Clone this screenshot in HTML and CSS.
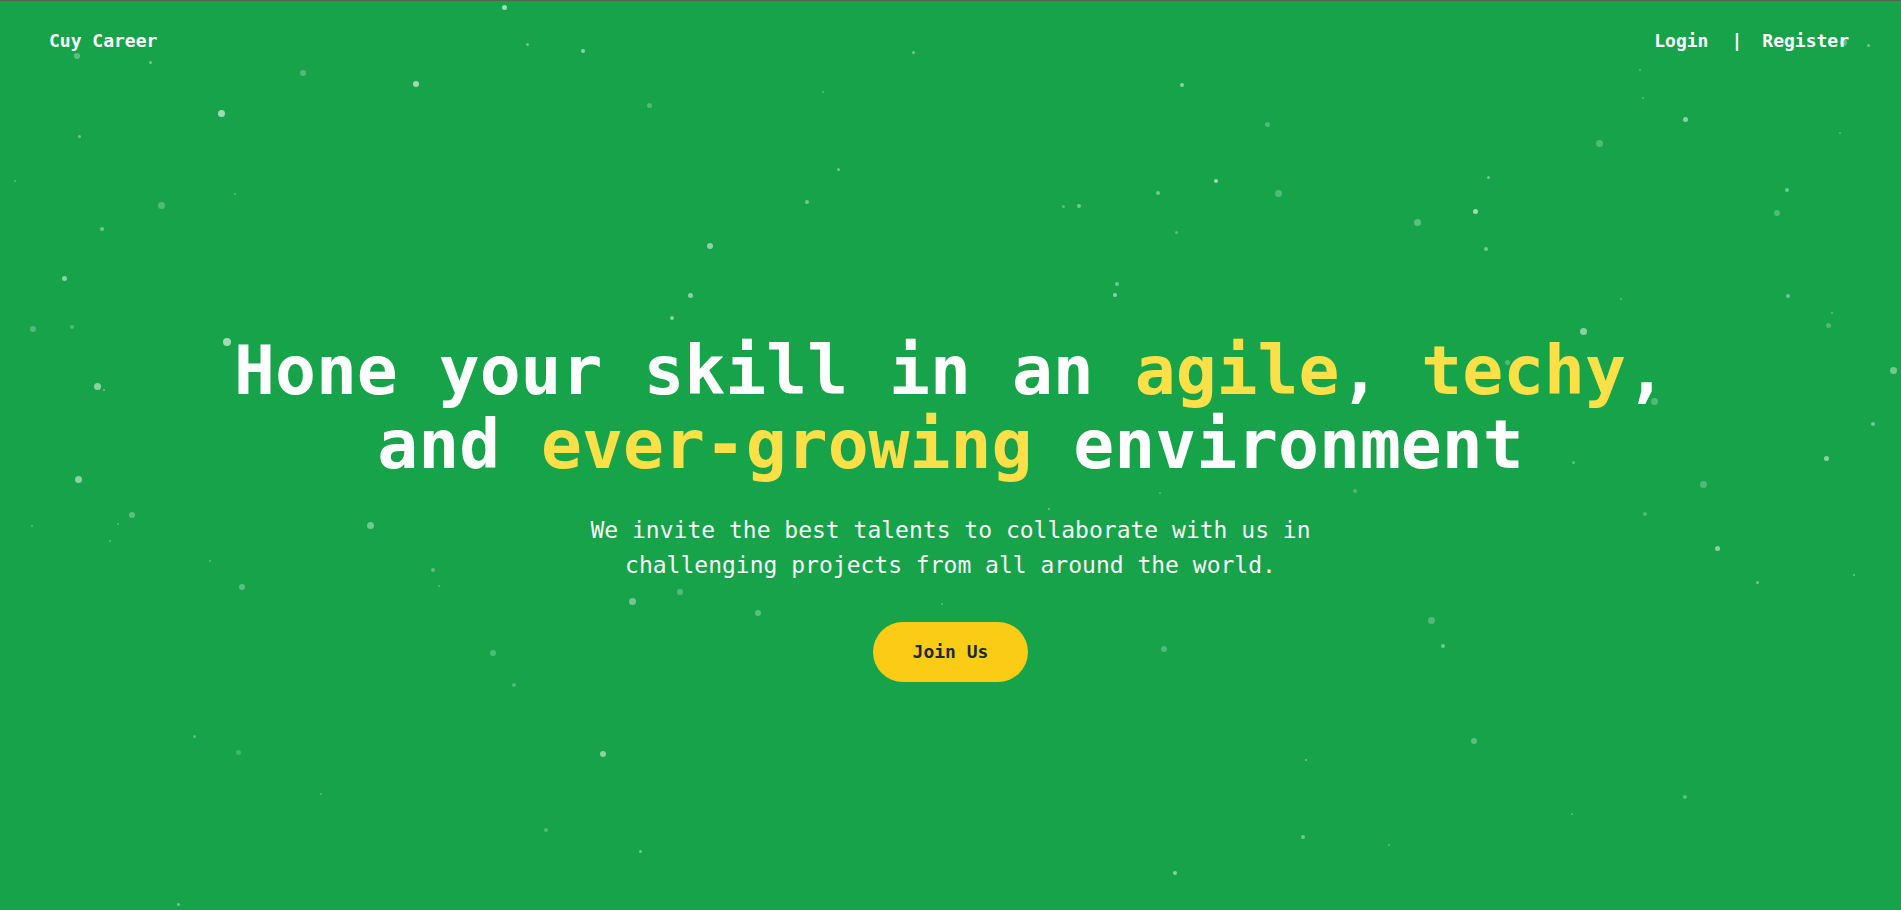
FILE: index.html
```html
<!DOCTYPE html>
<html lang="en">
<head>
<meta charset="utf-8">
<title>Cuy Career</title>
<link rel="stylesheet" href="styles.css">
</head>
<body>
<div class="page">
  <div class="particles" aria-hidden="true">
    <span class="dot" style="--x:504px;--y:7px;--s:5px;--o:.6"></span>
    <span class="dot" style="--x:527px;--y:44px;--s:3px;--o:.4"></span>
    <span class="dot" style="--x:583px;--y:51px;--s:4px;--o:.5"></span>
    <span class="dot" style="--x:416px;--y:84px;--s:6px;--o:.6"></span>
    <span class="dot" style="--x:303px;--y:73px;--s:6px;--o:.25"></span>
    <span class="dot" style="--x:221px;--y:113px;--s:7px;--o:.6"></span>
    <span class="dot" style="--x:150px;--y:62px;--s:3px;--o:.4"></span>
    <span class="dot" style="--x:77px;--y:56px;--s:6px;--o:.3"></span>
    <span class="dot" style="--x:79px;--y:136px;--s:3px;--o:.4"></span>
    <span class="dot" style="--x:15px;--y:181px;--s:2px;--o:.3"></span>
    <span class="dot" style="--x:161px;--y:205px;--s:7px;--o:.25"></span>
    <span class="dot" style="--x:102px;--y:229px;--s:4px;--o:.4"></span>
    <span class="dot" style="--x:235px;--y:194px;--s:2px;--o:.3"></span>
    <span class="dot" style="--x:710px;--y:246px;--s:6px;--o:.5"></span>
    <span class="dot" style="--x:690px;--y:295px;--s:5px;--o:.5"></span>
    <span class="dot" style="--x:672px;--y:318px;--s:4px;--o:.5"></span>
    <span class="dot" style="--x:807px;--y:202px;--s:4px;--o:.4"></span>
    <span class="dot" style="--x:838px;--y:169px;--s:3px;--o:.4"></span>
    <span class="dot" style="--x:823px;--y:92px;--s:2px;--o:.3"></span>
    <span class="dot" style="--x:649px;--y:105px;--s:5px;--o:.25"></span>
    <span class="dot" style="--x:913px;--y:52px;--s:3px;--o:.4"></span>
    <span class="dot" style="--x:1182px;--y:85px;--s:4px;--o:.5"></span>
    <span class="dot" style="--x:1267px;--y:124px;--s:5px;--o:.25"></span>
    <span class="dot" style="--x:1216px;--y:181px;--s:4px;--o:.6"></span>
    <span class="dot" style="--x:1158px;--y:193px;--s:4px;--o:.4"></span>
    <span class="dot" style="--x:1063px;--y:206px;--s:3px;--o:.3"></span>
    <span class="dot" style="--x:1079px;--y:206px;--s:4px;--o:.4"></span>
    <span class="dot" style="--x:1278px;--y:193px;--s:7px;--o:.25"></span>
    <span class="dot" style="--x:1176px;--y:232px;--s:3px;--o:.3"></span>
    <span class="dot" style="--x:1475px;--y:211px;--s:5px;--o:.6"></span>
    <span class="dot" style="--x:1488px;--y:177px;--s:3px;--o:.4"></span>
    <span class="dot" style="--x:1417px;--y:222px;--s:7px;--o:.3"></span>
    <span class="dot" style="--x:1486px;--y:249px;--s:4px;--o:.4"></span>
    <span class="dot" style="--x:1599px;--y:143px;--s:7px;--o:.25"></span>
    <span class="dot" style="--x:1685px;--y:119px;--s:5px;--o:.5"></span>
    <span class="dot" style="--x:1643px;--y:98px;--s:2px;--o:.3"></span>
    <span class="dot" style="--x:1640px;--y:70px;--s:2px;--o:.3"></span>
    <span class="dot" style="--x:1787px;--y:190px;--s:4px;--o:.4"></span>
    <span class="dot" style="--x:1777px;--y:213px;--s:6px;--o:.25"></span>
    <span class="dot" style="--x:1843px;--y:42px;--s:7px;--o:.3"></span>
    <span class="dot" style="--x:1868px;--y:45px;--s:3px;--o:.4"></span>
    <span class="dot" style="--x:1840px;--y:133px;--s:2px;--o:.3"></span>
    <span class="dot" style="--x:1583px;--y:331px;--s:7px;--o:.5"></span>
    <span class="dot" style="--x:1621px;--y:299px;--s:2px;--o:.3"></span>
    <span class="dot" style="--x:1507px;--y:362px;--s:5px;--o:.25"></span>
    <span class="dot" style="--x:1654px;--y:401px;--s:7px;--o:.25"></span>
    <span class="dot" style="--x:1788px;--y:296px;--s:4px;--o:.4"></span>
    <span class="dot" style="--x:1832px;--y:313px;--s:2px;--o:.3"></span>
    <span class="dot" style="--x:1828px;--y:325px;--s:5px;--o:.25"></span>
    <span class="dot" style="--x:1893px;--y:370px;--s:7px;--o:.4"></span>
    <span class="dot" style="--x:1873px;--y:424px;--s:4px;--o:.4"></span>
    <span class="dot" style="--x:1826px;--y:458px;--s:5px;--o:.5"></span>
    <span class="dot" style="--x:1703px;--y:484px;--s:7px;--o:.25"></span>
    <span class="dot" style="--x:1717px;--y:548px;--s:5px;--o:.5"></span>
    <span class="dot" style="--x:1757px;--y:582px;--s:3px;--o:.4"></span>
    <span class="dot" style="--x:1645px;--y:514px;--s:4px;--o:.25"></span>
    <span class="dot" style="--x:1573px;--y:462px;--s:3px;--o:.3"></span>
    <span class="dot" style="--x:1355px;--y:491px;--s:4px;--o:.25"></span>
    <span class="dot" style="--x:1049px;--y:509px;--s:2px;--o:.4"></span>
    <span class="dot" style="--x:1160px;--y:493px;--s:2px;--o:.3"></span>
    <span class="dot" style="--x:1117px;--y:284px;--s:4px;--o:.4"></span>
    <span class="dot" style="--x:1115px;--y:295px;--s:4px;--o:.5"></span>
    <span class="dot" style="--x:1854px;--y:575px;--s:2px;--o:.4"></span>
    <span class="dot" style="--x:1431px;--y:620px;--s:7px;--o:.25"></span>
    <span class="dot" style="--x:1443px;--y:646px;--s:4px;--o:.4"></span>
    <span class="dot" style="--x:1164px;--y:649px;--s:6px;--o:.25"></span>
    <span class="dot" style="--x:1474px;--y:741px;--s:6px;--o:.3"></span>
    <span class="dot" style="--x:1306px;--y:760px;--s:2px;--o:.4"></span>
    <span class="dot" style="--x:1685px;--y:797px;--s:4px;--o:.3"></span>
    <span class="dot" style="--x:1572px;--y:814px;--s:2px;--o:.3"></span>
    <span class="dot" style="--x:1303px;--y:837px;--s:4px;--o:.4"></span>
    <span class="dot" style="--x:1389px;--y:845px;--s:2px;--o:.3"></span>
    <span class="dot" style="--x:1175px;--y:873px;--s:4px;--o:.5"></span>
    <span class="dot" style="--x:942px;--y:604px;--s:2px;--o:.3"></span>
    <span class="dot" style="--x:758px;--y:613px;--s:6px;--o:.3"></span>
    <span class="dot" style="--x:680px;--y:592px;--s:6px;--o:.25"></span>
    <span class="dot" style="--x:632px;--y:601px;--s:7px;--o:.4"></span>
    <span class="dot" style="--x:493px;--y:653px;--s:6px;--o:.25"></span>
    <span class="dot" style="--x:514px;--y:685px;--s:4px;--o:.25"></span>
    <span class="dot" style="--x:439px;--y:586px;--s:2px;--o:.3"></span>
    <span class="dot" style="--x:433px;--y:570px;--s:4px;--o:.3"></span>
    <span class="dot" style="--x:370px;--y:525px;--s:7px;--o:.4"></span>
    <span class="dot" style="--x:242px;--y:587px;--s:6px;--o:.3"></span>
    <span class="dot" style="--x:132px;--y:515px;--s:6px;--o:.3"></span>
    <span class="dot" style="--x:118px;--y:524px;--s:2px;--o:.3"></span>
    <span class="dot" style="--x:110px;--y:541px;--s:2px;--o:.3"></span>
    <span class="dot" style="--x:78px;--y:479px;--s:7px;--o:.5"></span>
    <span class="dot" style="--x:97px;--y:386px;--s:7px;--o:.5"></span>
    <span class="dot" style="--x:104px;--y:390px;--s:2px;--o:.4"></span>
    <span class="dot" style="--x:227px;--y:342px;--s:8px;--o:.6"></span>
    <span class="dot" style="--x:33px;--y:329px;--s:6px;--o:.25"></span>
    <span class="dot" style="--x:72px;--y:327px;--s:4px;--o:.25"></span>
    <span class="dot" style="--x:64px;--y:278px;--s:5px;--o:.5"></span>
    <span class="dot" style="--x:194px;--y:736px;--s:3px;--o:.3"></span>
    <span class="dot" style="--x:238px;--y:752px;--s:5px;--o:.2"></span>
    <span class="dot" style="--x:321px;--y:794px;--s:2px;--o:.3"></span>
    <span class="dot" style="--x:546px;--y:830px;--s:4px;--o:.25"></span>
    <span class="dot" style="--x:603px;--y:754px;--s:6px;--o:.5"></span>
    <span class="dot" style="--x:640px;--y:851px;--s:3px;--o:.4"></span>
    <span class="dot" style="--x:178px;--y:904px;--s:3px;--o:.4"></span>
    <span class="dot" style="--x:210px;--y:561px;--s:2px;--o:.3"></span>
    <span class="dot" style="--x:32px;--y:526px;--s:2px;--o:.3"></span>
  </div>

  <header class="nav">
    <a class="brand" href="#">Cuy Career</a>
    <nav class="nav-links">
      <a href="#">Login</a>
      <span class="sep">|</span>
      <a href="#">Register</a>
    </nav>
  </header>

  <main class="hero">
    <h1 class="hero-title">Hone your skill in an <span class="hl">agile</span>, <span class="hl">techy</span>,<br>and <span class="hl">ever-growing</span> environment</h1>
    <p class="hero-sub">We invite the best talents to collaborate with us in challenging projects from all around the world.</p>
    <a class="btn" href="#">Join Us</a>
  </main>
</div>
</body>
</html>
```

FILE: styles.css
```css
* { box-sizing: border-box; }

html, body {
  margin: 0;
  padding: 0;
}

body {
  font-family: "DejaVu Sans Mono", "Liberation Mono", monospace;
  background: #16a34a;
  color: #ffffff;
}

.page {
  position: relative;
  min-height: 910px;
  overflow: hidden;
  background: #17a34a;
  border-top: 1px solid #5a5f5b;
}

.particles {
  position: absolute;
  inset: 0;
  z-index: 0;
  pointer-events: none;
}

.dot {
  position: absolute;
  left: var(--x);
  top: calc(var(--y) - 1px);
  width: var(--s);
  height: var(--s);
  margin-left: calc(var(--s) / -2);
  margin-top: calc(var(--s) / -2);
  border-radius: 50%;
  background: #ffffff;
  opacity: var(--o);
}

.nav {
  position: relative;
  z-index: 1;
  display: flex;
  justify-content: space-between;
  align-items: center;
  padding: 26px 52px 0 49px;
  font-size: 18px;
  line-height: 28px;
  font-weight: 700;
}

.nav a {
  color: #ffffff;
  text-decoration: none;
}

.nav-links {
  display: flex;
  align-items: center;
}

.sep {
  margin: 0 20px 0 23px;
  font-weight: 700;
}

.hero {
  position: relative;
  z-index: 1;
  display: flex;
  flex-direction: column;
  align-items: center;
  text-align: center;
  padding-top: 279px;
}

.hero-title {
  margin: 0;
  font-size: 68px;
  line-height: 74px;
  font-weight: 700;
  color: #ffffff;
}

.hl {
  color: #fde047;
}

.hero-sub {
  margin: 31px 0 0;
  max-width: 740px;
  font-size: 23px;
  line-height: 35px;
  font-weight: 400;
  color: #f8faf8;
}

.btn {
  margin-top: 39px;
  display: inline-block;
  padding: 18px 40px;
  border-radius: 9999px;
  background: #facc15;
  color: #1f2937;
  font-size: 18px;
  line-height: 24px;
  font-weight: 700;
  text-decoration: none;
}
```
